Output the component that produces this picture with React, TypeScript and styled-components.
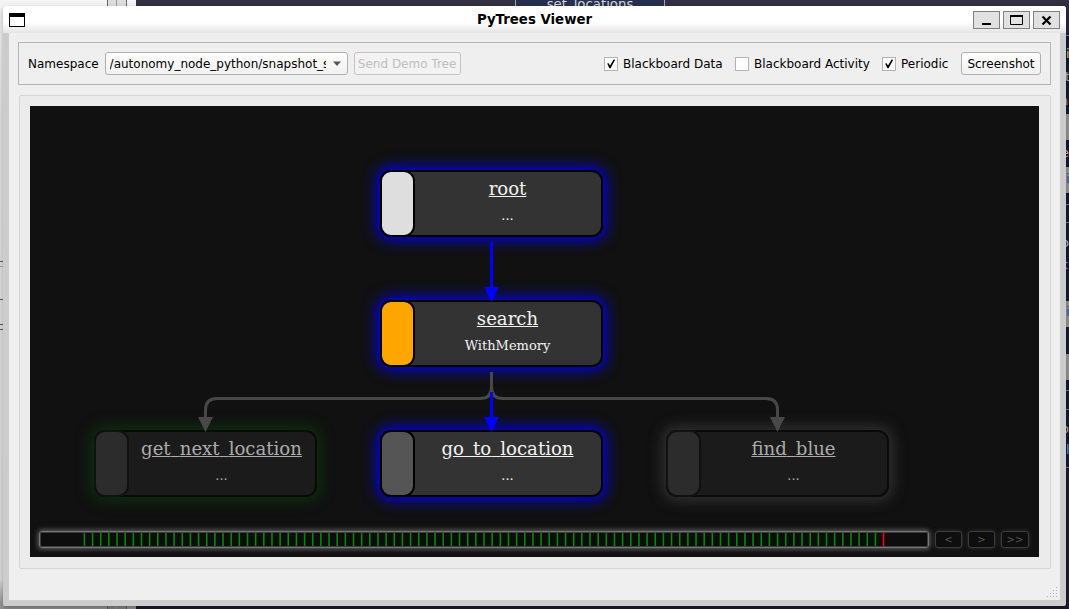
import React from "react";
import styled, { createGlobalStyle, css } from "styled-components";

const Global = createGlobalStyle`
  * { box-sizing: border-box; }
  body { margin: 0; overflow: hidden; font: 12px "DejaVu Sans", sans-serif; color: #000; }
`;

/* ---------- desktop behind the window ---------- */
const Desktop = styled.main`
  position: relative;
  width: 1069px;
  height: 609px;
  overflow: hidden;
  display: flex;
  background: #e9e9e9;
`;
const PaperStrip = styled.div`
  width: 136px;
  background: linear-gradient(#f4f4f4, #e4e4e4 20%, #dedede 95%, #999 99%);
  display: flex;
  justify-content: flex-end;
`;
const Scroller = styled.div`
  width: 20px;
  margin-right: 9px;
  border: solid #666;
  border-width: 0 1px;
  background: linear-gradient(90deg, transparent 8px, #999 8px 9px, transparent 9px), linear-gradient(#ddd, #ccc 90%, #888);
`;
const Editor = styled.div`
  flex: 1;
  background: linear-gradient(#333042, #1b1929 12%, #1d1b2b);
`;
const Behind = styled.div<{ $x: number; $y: number; $w: number; $h: number; $c: string }>`
  position: absolute;
  left: ${(p) => p.$x}px;
  top: ${(p) => p.$y}px;
  width: ${(p) => p.$w}px;
  height: ${(p) => p.$h}px;
  background: ${(p) => p.$c};
`;
const BehindTab = styled.div`
  position: absolute;
  left: 515px;
  top: -5px;
  width: 150px;
  height: 16px;
  background: #27304f;
  border: solid #a5a5b0;
  border-width: 0 1px;
  color: #d2d4dc;
  font-size: 13.3px;
  line-height: 19px;
  text-align: center;
`;
const Glyph = styled.span<{ $y: number; $c: string; $x?: number }>`
  position: absolute;
  left: ${(p) => p.$x ?? 1062}px;
  top: ${(p) => p.$y - 8}px;
  line-height: 16px;
  font-size: 13px;
  color: ${(p) => p.$c};
`;

/* ---------- window ---------- */
const Window = styled.section`
  position: absolute;
  left: 3px;
  top: 6px;
  width: 1063px;
  height: 600px;
  display: flex;
  flex-direction: column;
  border-radius: 3px 3px 2px 2px;
  overflow: hidden;
  background: #ccc;
`;
const WindowShadow = styled.div`
  position: absolute;
  left: 3px;
  top: 6px;
  width: 1063px;
  height: 600px;
  box-shadow: 0 3px 6px rgba(0, 0, 0, 0.3);
`;
const TitleBar = styled.header`
  height: 27px;
  flex: none;
  display: grid;
  grid-template-columns: 90px 1fr 90px;
  background: linear-gradient(#fff 60%, #e4e4e4);
`;
const WindowGlyph = styled.div`
  width: 16px;
  height: 14px;
  margin: 7px 0 0 6px;
  border: 1px solid #000;
  border-top-width: 4px;
  background: #fff;
`;
const Title = styled.h1`
  margin: 0;
  font-size: 13.33px;
  font-weight: bold;
  line-height: 27px;
  text-align: center;
`;
const WindowButtons = styled.div`
  display: flex;
  gap: 3px;
  justify-content: flex-end;
  padding: 5px 6px 0 0;
`;
const WindowButton = styled.button`
  width: 27px;
  height: 18px;
  padding: 0;
  border: 1px solid #808080;
  background: #e1e1e1;
  display: block;
  svg { display: block; }
`;
const Body = styled.div`
  flex: 1;
  margin: 0 6px 6px;
  padding: 9px 9px 0;
  background: #efefef;
  position: relative;
`;
const Toolbar = styled.div`
  height: 43px;
  display: flex;
  align-items: center;
  padding: 0 9px;
  border: 1px solid #b5b5b5;
`;
const Spacer = styled.div`
  flex: 1;
`;
const controlBox = css`
  height: 23px;
  border: 1px solid #b0b0b0;
  border-radius: 3px;
  background: linear-gradient(#fff, #f0f0f0);
  font: 12px/20px "DejaVu Sans", sans-serif;
`;
const Combo = styled.div`
  ${controlBox}
  width: 243px;
  margin: 0 6px 0 6px;
  padding: 0 6px 0 4px;
  display: flex;
  align-items: center;
`;
const ComboText = styled.span`
  width: 216px;
  overflow: hidden;
  white-space: nowrap;
`;
const Button = styled.button<{ $w: number }>`
  ${controlBox}
  width: ${(p) => p.$w}px;
  padding: 0;
  color: #000;
  white-space: nowrap;
  &:disabled { color: #bebebe; border-color: #c4c4c4; background: #f3f3f3; }
`;
const CheckLabel = styled.label<{ $w: number }>`
  display: flex;
  align-items: center;
  gap: 5px;
  width: ${(p) => p.$w}px;
  white-space: nowrap;
`;
const CheckBox = styled.span`
  width: 14px;
  height: 14px;
  flex: none;
  border: 1px solid #b4b4b4;
  background: #fff;
  svg { display: block; }
`;
const Panel = styled.div`
  margin: 10px 0 0 1px;
  height: 474px;
  padding: 10px;
  border: 1px solid #d5d5d5;
  border-radius: 2px;
  background: #ebebeb;
`;
const Grip = styled.svg`
  position: absolute;
  right: 1px;
  bottom: 1px;
`;

/* ---------- tree canvas ---------- */
const Canvas = styled.div`
  position: relative;
  width: 1009px;
  height: 451px;
  overflow: hidden;
  background: #111;
  display: flex;
  flex-direction: column;
  justify-content: flex-end;
`;
const Links = styled.svg`
  position: absolute;
  inset: 0;
`;
const Node = styled.div<{ $x: number; $y: number; $glow: string; $dim?: boolean }>`
  position: absolute;
  left: ${(p) => p.$x}px;
  top: ${(p) => p.$y}px;
  width: 223px;
  height: 67px;
  display: flex;
  border: 2px solid ${(p) => (p.$dim ? "#0a0a0a" : "#000")};
  border-radius: 11px;
  background: ${(p) => (p.$dim ? "#1b1b1b" : "#333")};
  color: ${(p) => (p.$dim ? "#acacac" : "#f2f2f2")};
  box-shadow: ${(p) => p.$glow};
`;
const Swatch = styled.div<{ $c: string; $dim?: boolean }>`
  width: 35px;
  height: 67px;
  margin: -2px 0 0 -2px;
  flex: none;
  border: 2px solid ${(p) => (p.$dim ? "#111" : "#000")};
  border-radius: 11px;
  background: ${(p) => p.$c};
`;
const NodeText = styled.div`
  flex: 1;
  margin-left: -1px;
  display: flex;
  flex-direction: column;
  align-items: center;
  font-family: "DejaVu Serif", serif;
  white-space: nowrap;
`;
const NodeName = styled.span<{ $dim?: boolean }>`
  font-size: 18.13px;
  line-height: 22px;
  margin-top: 6px;
  text-decoration: underline;
  text-decoration-color: ${(p) => (p.$dim ? "#acacac" : "#f2f2f2")};
`;
const Underscore = styled.span`
  color: transparent;
  text-decoration-skip-ink: none;
`;
const NodeDetail = styled.span`
  font-size: 13px;
  line-height: 16px;
  margin-top: 8px;
`;
const Timeline = styled.div`
  display: flex;
  gap: 6px;
  padding: 0 10px 9px 9px;
`;
const Track = styled.div`
  width: 890px;
  height: 17px;
  border: 1px solid #777;
  outline: 1px solid #3c3c3c;
  outline-offset: -2px;
  border-radius: 3px;
  background: #0d0d0d;
  box-shadow: 0 0 5px 1px #666;
  svg { display: block; }
`;
const Step = styled.button<{ $w: number }>`
  width: ${(p) => p.$w}px;
  height: 17px;
  padding: 0;
  border: 1px solid #3c3c3c;
  border-radius: 3px;
  background: #0e0e0e;
  box-shadow: 0 0 4px #333;
  color: #555;
  font: 10px/14px "DejaVu Sans", sans-serif;
`;

const blueGlow = "0 0 14px 4px rgba(0,0,255,.75), 0 0 5px 1px rgba(0,0,255,.35)";
const nodes = [
  { name: "root", detail: "...", x: 350, y: 64, color: "#dedede", glow: blueGlow },
  { name: "search", detail: "WithMemory", x: 350, y: 194, color: "#ffa500", glow: blueGlow },
  { name: "get_next_location", detail: "...", x: 64, y: 324, color: "#2c2c2c", glow: "0 0 13px 4px #0d2f0d", dim: true },
  { name: "go_to_location", detail: "...", x: 350, y: 324, color: "#555", glow: blueGlow },
  { name: "find_blue", detail: "...", x: 636, y: 324, color: "#2c2c2c", glow: "0 0 13px 4px #303030", dim: true },
];

const ticks = Array.from({ length: 99 }, (_, i) => 44.4 + i * 8.155);

function Check({ label, w, on }: { label: string; w: number; on?: boolean }) {
  return (
    <CheckLabel $w={w}>
      <CheckBox>
        {on && (
          <svg width="12" height="12" viewBox="0 0 12 12">
            <path d="M2.2 5.6 L3.6 5.2 L5 7.6 L8.6 1.6 L10.2 1.8 L5.6 10.2 L4.4 10.2 Z" fill="#000" />
          </svg>
        )}
      </CheckBox>
      {label}
    </CheckLabel>
  );
}

export default function App() {
  return (
    <Desktop>
      <Global />
      <PaperStrip>
        <Scroller />
      </PaperStrip>
      <Editor />
      <BehindTab>set_locations</BehindTab>
      <Behind $x={1060} $y={35} $w={9} $h={432} $c="#171a30" />
      {[[114, 26], [167, 26], [301, 26], [354, 26]].map(([y, h]) => (
        <Behind key={y} $x={1060} $y={y} $w={9} $h={h} $c="#969696" />
      ))}
      {[35, 204, 222, 390, 409, 467].map((y) => (
        <Behind key={y} $x={1060} $y={y} $w={9} $h={1} $c="#77798a" />
      ))}
      <WindowShadow />
      {[261, 299, 324, 329].map((y) => (
        <Behind key={y} $x={0} $y={y} $w={9} $h={1} $c="#555" />
      ))}
      <Behind $x={0} $y={266} $w={9} $h={1} $c="#999" />
      <Glyph $y={54} $x={1066} $c="#bbb79d">i</Glyph>
      <Glyph $y={77} $x={1065} $c="#a9a68b">t</Glyph>
      <Glyph $y={101} $x={1060} $c="#a8794a">n</Glyph>
      <Glyph $y={153} $x={1061} $c="#b6a98d">e</Glyph>
      <Glyph $y={179} $x={1066} $c="#3541a0">i</Glyph>
      <Glyph $y={243} $x={1061} $c="#9fb2d0">o</Glyph>
      <Glyph $y={265} $x={1061} $c="#999">c</Glyph>
      <Glyph $y={312} $x={1066} $c="#3541a0">i</Glyph>
      <Glyph $y={429} $x={1061} $c="#b09a80">o</Glyph>
      <Glyph $y={450} $x={1066} $c="#5a93cc">l</Glyph>

      <Window>
        <TitleBar>
          <WindowGlyph />
          <Title>PyTrees Viewer</Title>
          <WindowButtons>
            <WindowButton aria-label="Minimize">
              <svg width="25" height="16"><path d="M8 12h9" stroke="#000" strokeWidth="2" /></svg>
            </WindowButton>
            <WindowButton aria-label="Maximize">
              <svg width="25" height="16">
                <path d="M6.5 3v9.5h12V3" fill="none" stroke="#000" />
                <path d="M6 4h13" stroke="#000" strokeWidth="2" />
              </svg>
            </WindowButton>
            <WindowButton aria-label="Close">
              <svg width="25" height="16"><path d="M8.5 4.5l8 8M16.5 4.5l-8 8" stroke="#000" strokeWidth="2.2" /></svg>
            </WindowButton>
          </WindowButtons>
        </TitleBar>
        <Body>
          <Toolbar>
            Namespace
            <Combo>
              <ComboText>/autonomy_node_python/snapshot_streams</ComboText>
              <Spacer />
              <svg width="8" height="5"><path d="M0 0.5h8L4 5z" fill="#555" /></svg>
            </Combo>
            <Button $w={107} disabled>Send Demo Tree</Button>
            <Spacer />
            <Check label="Blackboard Data" w={131} on />
            <Check label="Blackboard Activity" w={147} />
            <Check label="Periodic" w={79} on />
            <Button $w={80}>Screenshot</Button>
          </Toolbar>
          <Panel>
            <Canvas>
              {nodes.map((n) => (
                <Node key={n.name} $x={n.x} $y={n.y} $glow={n.glow} $dim={n.dim}>
                  <Swatch $c={n.color} $dim={n.dim} />
                  <NodeText>
                    <NodeName $dim={n.dim}>
                      {n.name.split("_").map((word, i) => (
                        <React.Fragment key={i}>
                          {i > 0 && <Underscore>_</Underscore>}
                          {word}
                        </React.Fragment>
                      ))}
                    </NodeName>
                    <NodeDetail>{n.detail}</NodeDetail>
                  </NodeText>
                </Node>
              ))}
              <Links width="1009" height="451" fill="none" strokeWidth="3">
                <path d="M461.5 136V183M461.5 267V313" stroke="#00f" />
                <path d="M454 181h15l-7.5 15zM454 311h15l-7.5 15z" fill="#00f" />
                <path d="M461.5 266V281Q461.5 292.5 450 292.5H187Q175.5 292.5 175.5 304V313" stroke="#484848" />
                <path d="M461.5 266V281Q461.5 292.5 473 292.5H736Q747.5 292.5 747.5 304V313" stroke="#484848" />
                <path d="M461.5 286V313" stroke="#00f" />
                <path d="M168 311h15l-7.5 15zM740 311h15l-7.5 15z" fill="#484848" />
              </Links>
              <Timeline>
                <Track>
                  <svg width="888" height="15">
                    {ticks.map((x, i) => (
                      <path key={i} d={`M${x} 0V15`} stroke={i === 98 ? "#f00" : "#008a00"} strokeWidth="1.6" />
                    ))}
                  </svg>
                </Track>
                <Step $w={27}>&lt;</Step>
                <Step $w={27}>&gt;</Step>
                <Step $w={28}>&gt;&gt;</Step>
              </Timeline>
            </Canvas>
          </Panel>
          <Grip width="12" height="12" fill="#b5b5b5">
            {[0, 1, 2, 3].flatMap((r) =>
              [0, 1, 2, 3].filter((c) => c >= 3 - r).map((c) => (
                <rect key={`${r}${c}`} x={c * 3} y={r * 3} width="1" height="1" />
              ))
            )}
          </Grip>
        </Body>
      </Window>
    </Desktop>
  );
}
